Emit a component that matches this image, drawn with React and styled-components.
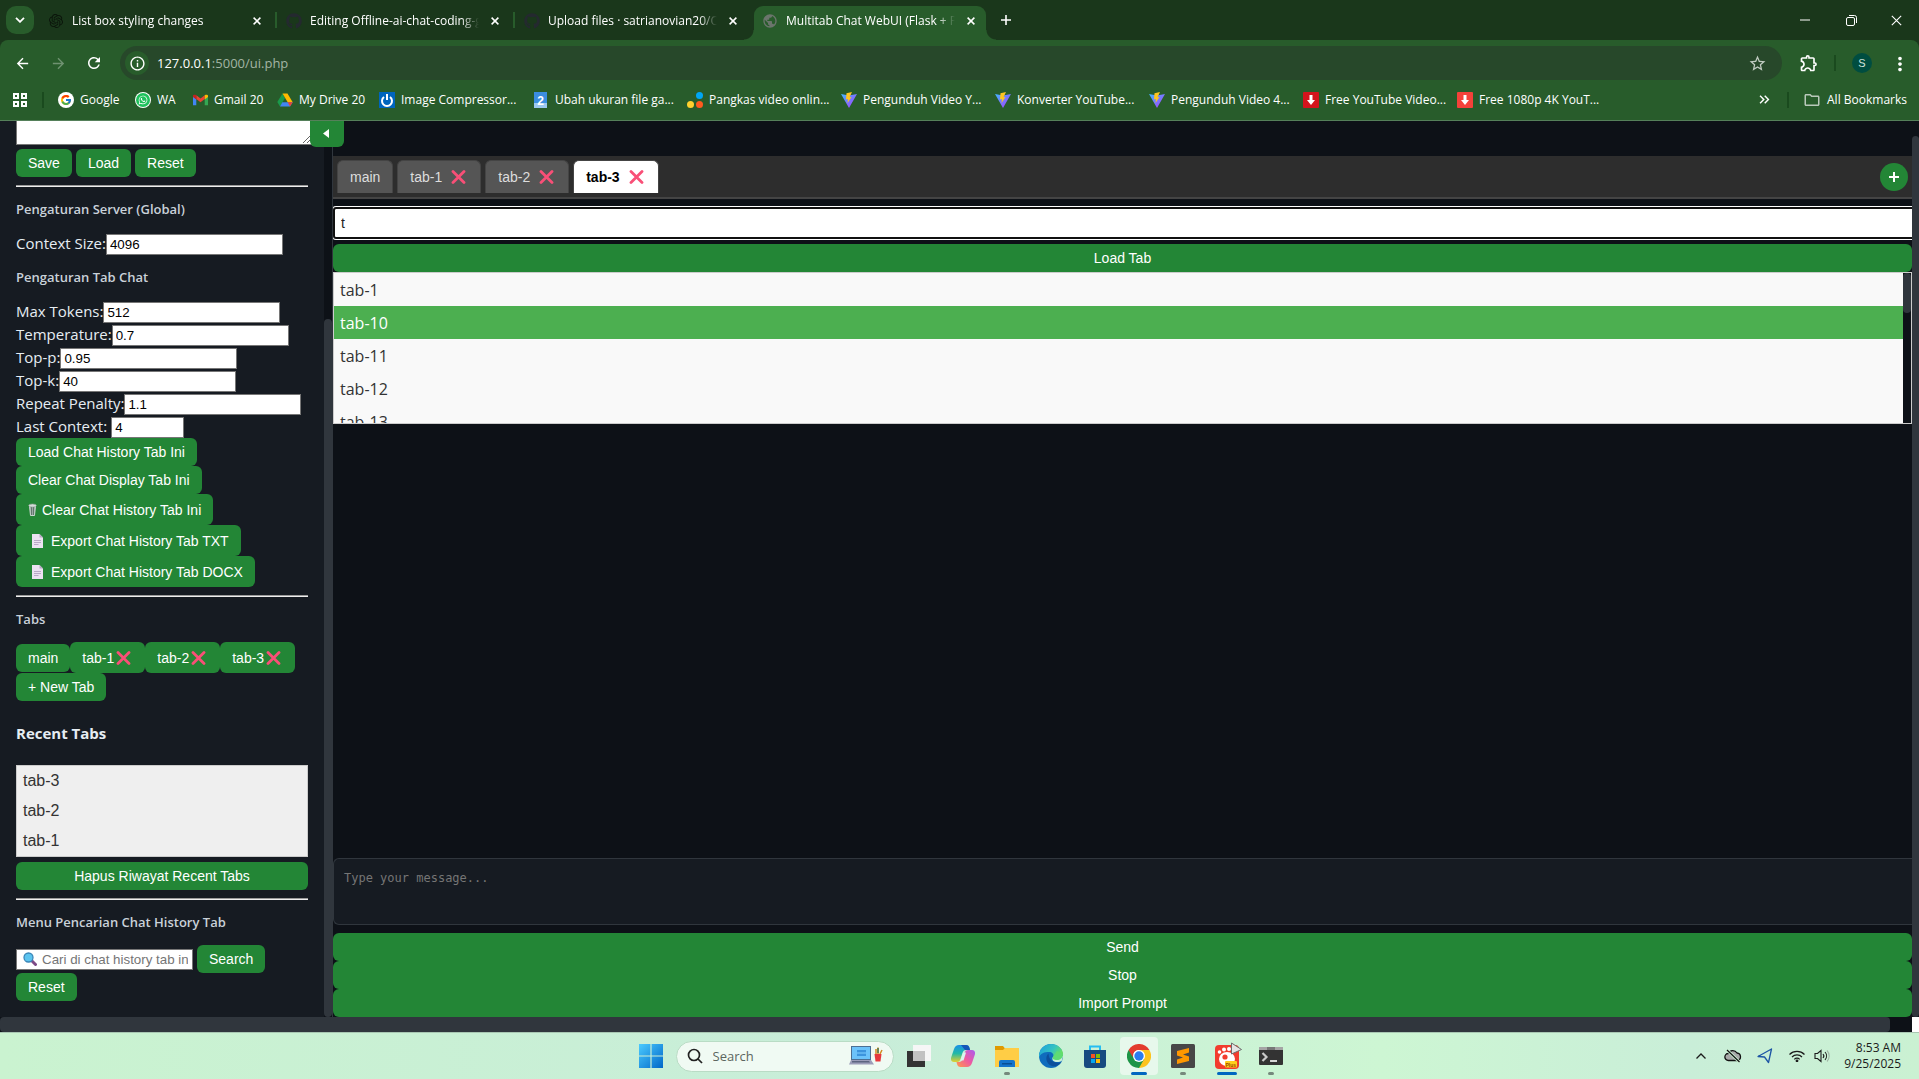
import React from "react";
import styled, { createGlobalStyle, css } from "styled-components";
import { FaGithub, FaWhatsapp } from "react-icons/fa";
import { SiOpenai } from "react-icons/si";
import { FcGoogle } from "react-icons/fc";
import { MdOutlineInfo, MdStarBorder, MdOutlineExtension, MdRefresh, MdArrowBack, MdArrowForward, MdMoreVert, MdPublic, MdKeyboardDoubleArrowRight, MdOutlineFolder } from "react-icons/md";

const ui = `"Open Sans", "Noto Sans", sans-serif`;
const arial = `"Liberation Sans", Arial, sans-serif`;

const GlobalStyle = createGlobalStyle`
  *, *::before, *::after { box-sizing: border-box; }
  body { margin: 0; background: #0d1117; font-family: ${ui}; overflow: hidden; }
  button, input, textarea, select { font-family: ${arial}; margin: 0; }
  button { cursor: pointer; }
  svg { display: block; flex: none; }
`;

const Screen = styled.div`
  display: flex;
  flex-direction: column;
  height: 100vh;
`;

/* ---------- Browser frame ---------- */

const TabStrip = styled.div`
  display: flex;
  align-items: stretch;
  height: 40px;
  padding-left: 6px;
  background: #1a371b;
  color: #fff;
`;

const TabSearch = styled.button`
  width: 28px;
  height: 28px;
  margin: 6px 3px 0 0;
  padding: 0;
  border: 0;
  border-radius: 10px;
  background: #285c2b;
  color: #fff;
  display: grid;
  place-items: center;
`;

const BrowserTab = styled.div`
  position: relative;
  display: flex;
  align-items: center;
  width: 238px;
  margin-top: 6px;
  padding: 0 8px 5px 11px;
  font-size: 12px;
  ${(p) => p.$divider && css`
    &::before {
      content: "";
      position: absolute;
      left: 0;
      top: 6px;
      width: 2px;
      height: 16px;
      background: #285c2b;
    }
  `}
  ${(p) => p.$active && css`
    &::before {
      content: "";
      position: absolute;
      inset: 0 3px;
      background: #285c2b;
      border-radius: 9px 9px 0 0;
    }
    &::after {
      content: "";
      position: absolute;
      left: -7px;
      right: -7px;
      bottom: 0;
      height: 10px;
      background:
        radial-gradient(circle at 0 0, transparent 9px, #285c2b 10px) left / 10px 10px no-repeat,
        radial-gradient(circle at 100% 0, transparent 9px, #285c2b 10px) right / 10px 10px no-repeat;
    }
  `}
  > * { position: relative; z-index: 1; }
`;

const Favicon = styled.span`
  display: grid;
  place-items: center;
  flex: none;
  width: 16px;
`;

const TabTitle = styled.span`
  flex: 1;
  margin: 0 6px 0 8px;
  overflow: hidden;
  white-space: nowrap;
  line-height: 18px;
  mask-image: linear-gradient(to right, #000 calc(100% - 18px), transparent);
`;

const PlainButton = styled.button`
  display: grid;
  place-items: center;
  width: ${(p) => p.$w || 20}px;
  height: ${(p) => p.$h || 20}px;
  padding: 0;
  border: 0;
  background: none;
  color: ${(p) => p.$color || "#fff"};
`;

const NewBrowserTab = styled(PlainButton)`
  margin: 10px 0 0 7px;
`;

const WindowButtons = styled.div`
  display: flex;
  margin-left: auto;
`;

const Toolbar = styled.div`
  display: flex;
  align-items: center;
  height: 40px;
  padding: 6px 8px 0 4px;
  background: #285c2b;
  border-radius: 8px 8px 0 0;
  color: #fff;
`;

const ToolbarBack = styled.div`
  background: #1a371b;
`;

const Omnibox = styled.div`
  flex: 1;
  display: flex;
  align-items: center;
  height: 34px;
  margin: 0 13px 0 8px;
  padding: 0 15px 0 5px;
  border-radius: 17px;
  background: #27482a;
`;

const SiteInfo = styled.span`
  display: grid;
  place-items: center;
  width: 24px;
  height: 24px;
  margin-right: 8px;
  border-radius: 50%;
  background: #285c2b;
`;

const Url = styled.span`
  flex: 1;
  font-size: 13px;
  color: #a3b5a4;
  b { font-weight: 400; color: #fff; }
`;

const Divider = styled.span`
  width: 2px;
  height: 16px;
  margin: ${(p) => p.$m || "0"};
  background: #1a4a1e;
`;

const Avatar = styled.button`
  width: 20px;
  height: 20px;
  padding: 0;
  margin: 0 16px;
  border: 0;
  border-radius: 50%;
  background: #004d40;
  color: #cfe3dc;
  font-size: 11px;
`;

const BookmarkBar = styled.nav`
  display: flex;
  align-items: center;
  height: 41px;
  padding: 0 12px 1px;
  border-bottom: 1px solid #55805a;
  background: #285c2b;
  color: #fff;
`;

const Bookmark = styled.a`
  display: flex;
  align-items: center;
  gap: 6px;
  width: ${(p) => (p.$w ? `${p.$w}px` : "auto")};
  color: #fff;
  font-size: 12px;
  line-height: 16px;
  white-space: nowrap;
  text-decoration: none;
`;

const BookmarkEnd = styled.div`
  display: flex;
  align-items: center;
  margin-left: auto;
`;

/* ---------- Page ---------- */

const Page = styled.div`
  flex: 1;
  min-height: 0;
  display: flex;
  background: #0d1117;
`;

const Sidebar = styled.aside`
  position: relative;
  display: flex;
  width: 333px;
  border-right: 1px solid #30363d;
  background: #161b22;
  color: #e6edf3;
`;

const SidebarBody = styled.div`
  flex: 1;
  min-width: 0;
  padding: 0 16px;
  overflow: hidden;
`;

const Track = styled.div`
  width: ${(p) => p.$w}px;
  padding-top: ${(p) => p.$from || 0}px;
  background: #0d1117;
  display: flex;
  flex: none;
`;

const Thumb = styled.div`
  flex: 1;
  height: ${(p) => p.$h || "100%"};
  border-radius: 4px;
  background: #30363d;
`;

const Toggle = styled.button`
  position: absolute;
  top: 0;
  left: 310px;
  z-index: 2;
  display: grid;
  place-items: center;
  width: 34px;
  height: 26px;
  padding: 0 2px 2px 0;
  border: 0;
  border-radius: 0 0 6px 6px;
  background: #238636;
  color: #fff;
`;

const PromptBox = styled.textarea`
  display: block;
  width: 296px;
  height: 24px;
  min-height: 0;
  border: 1px solid #767676;
  border-top: 0;
  border-radius: 0;
  background: #fff;
  resize: vertical;
`;

const Button = styled.button`
  display: flex;
  align-items: center;
  justify-content: center;
  width: ${(p) => (p.$wide ? "100%" : "auto")};
  height: ${(p) => (p.$tall ? 31 : 28)}px;
  padding: 0 12px;
  border: 0;
  border-radius: 6px;
  background: #238636;
  color: #fff;
  font-size: 14px;
  line-height: 16px;
  white-space: nowrap;
`;

const ButtonRow = styled.div`
  display: flex;
  align-items: center;
  gap: ${(p) => p.$gap || 0}px;
  margin-top: ${(p) => p.$mt || 0}px;
`;

const ButtonStack = styled.div`
  display: flex;
  flex-direction: column;
  align-items: flex-start;
`;

const Rule = styled.hr`
  height: 2px;
  margin: 8px 0;
  border: 0;
  border-top: 1px solid #9a9a9a;
  background: #eeeeee;
`;

const SectionTitle = styled.h4`
  margin: 12px 0 13px;
  color: #c9d1d9;
  font-size: 13px;
  font-weight: 600;
  line-height: 20px;
`;

const RecentTitle = styled.h3`
  margin: 21px 0;
  font-size: 15px;
  font-weight: 700;
  line-height: 22px;
`;

const Fields = styled.div`
  display: flex;
  flex-direction: column;
  gap: 2px;
  padding-top: 2px;
`;

const Field = styled.label`
  display: flex;
  align-items: flex-start;
  gap: ${(p) => p.$gap || 0}px;
  height: 21px;
  font-size: 15px;
  line-height: 19px;
  white-space: nowrap;
`;

const NumberBox = styled.input`
  width: ${(p) => p.$w || 177}px;
  height: 21px;
  padding: 1px 3px;
  border: 1px solid #767676;
  background: #fff;
  color: #000;
`;

const RecentList = styled.select`
  display: block;
  width: 100%;
  height: 92px;
  margin-bottom: 5px;
  padding: 0;
  border: 1px solid #ccc;
  border-radius: 0;
  background: #efefef;
  color: #333;
  font-size: 16px;
  overflow: hidden;
  outline: 0;
  option { padding: 6px 6px 4px; min-height: 30px; line-height: 20px; }
`;

const SearchBox = styled.label`
  display: flex;
  align-items: center;
  gap: 5px;
  width: 177px;
  height: 21px;
  padding: 0 4px 0 6px;
  border: 1px solid #767676;
  background: #fff;
  input {
    flex: 1;
    min-width: 0;
    padding: 0;
    border: 0;
    outline: 0;
    background: none;
  }
  input::placeholder { color: #757575; }
`;

const Main = styled.main`
  flex: 1;
  min-width: 0;
  display: flex;
  flex-direction: column;
  padding-top: 35px;
`;

const ChatTabs = styled.div`
  display: flex;
  align-items: center;
  gap: 4px;
  height: 43px;
  padding: 0 4px;
  border-bottom: 2px solid #444;
  background: #2d2d2d;
`;

const ChatTab = styled.button`
  display: flex;
  align-items: center;
  gap: 7px;
  height: 33px;
  padding: 0 12px;
  border: 1px solid #444;
  border-bottom: 0;
  border-radius: 6px 6px 0 0;
  background: #555;
  color: #ddd;
  font-size: 14px;
  ${(p) => p.$active && css`
    background: #fff;
    color: #000;
    font-weight: 700;
  `}
`;

const AddTab = styled.button`
  display: grid;
  place-items: center;
  width: 28px;
  height: 28px;
  margin-left: auto;
  padding: 0;
  border: 0;
  border-radius: 50%;
  background: #238636;
  color: #fff;
`;

const FilterBox = styled.input`
  height: 32px;
  margin: 8px 0 5px;
  padding: 0 6px;
  border: 2px solid #101010;
  border-right: 0;
  border-radius: 3px 0 0 3px;
  outline: 0;
  box-shadow: 0 0 0 1px #fff;
  background: #fff;
  color: #222;
  font-size: 14px;
`;

const Suggestions = styled.div`
  display: flex;
  height: 152px;
  border: 1px solid #ccc;
  background: #f9f9f9;
`;

const SuggestionList = styled.ul`
  flex: 1;
  margin: 0;
  padding: 0;
  overflow: hidden;
  list-style: none;
`;

const Suggestion = styled.li`
  height: 33px;
  padding: 0 6px;
  background: ${(p) => (p.$active ? "#4caf50" : "#f9f9f9")};
  color: ${(p) => (p.$active ? "#fff" : "#333")};
  font-size: 16px;
  line-height: 34px;
`;

const ChatLog = styled.section`
  flex: 1;
`;

const Message = styled.textarea`
  display: block;
  height: 67px;
  margin-bottom: 8px;
  padding: 11px 10px;
  border: 1px solid #30363d;
  border-right: 0;
  border-radius: 6px 0 0 6px;
  background: #161b22;
  color: #e6edf3;
  font-family: "DejaVu Sans Mono", monospace;
  font-size: 12px;
  line-height: 16px;
  resize: none;
  &::placeholder { color: #757575; }
`;

const BottomScroll = styled.div`
  display: flex;
  height: 15px;
  background: linear-gradient(to left, #fff 7px, #0d1117 7px);
  padding-right: 29px;
`;

/* ---------- Taskbar ---------- */

const Taskbar = styled.footer`
  display: grid;
  grid-template-columns: 1fr auto 1fr;
  align-items: center;
  height: 47px;
  border-top: 1px solid #a9c7b3;
  background: linear-gradient(to right, #caf3d0, #c8edd9 45%, #cdf6d3 72%, #c9eed8 88%, #caf1d2);
`;

const Apps = styled.div`
  grid-column: 2;
  display: flex;
  align-items: center;
  padding-left: 2px;
`;

const AppButton = styled.button`
  position: relative;
  display: grid;
  place-items: center;
  width: 38px;
  height: 38px;
  margin: 0 3px;
  padding: 0 0 1px;
  border: 0;
  border-radius: 4px;
  background: ${(p) => (p.$active ? "#e7f8ec" : "none")};
  &::after {
    content: "";
    position: absolute;
    left: calc(50% - ${(p) => (p.$mark || 0) / 2}px);
    bottom: 0;
    width: ${(p) => p.$mark || 0}px;
    height: 3px;
    border-radius: 2px;
    background: ${(p) => (p.$mark > 6 ? "#0067c0" : "#75897c")};
  }
`;

const TaskSearch = styled.label`
  display: flex;
  align-items: center;
  width: 218px;
  height: 31px;
  margin: 0 3px;
  padding: 0 10px;
  border: 1px solid #b9dcc5;
  border-radius: 16px;
  background: #f0faf3;
  input {
    flex: 1;
    min-width: 0;
    margin-left: 10px;
    padding: 0;
    border: 0;
    outline: 0;
    background: none;
    font-family: ${ui};
    font-size: 13px;
  }
  input::placeholder { color: #5c665f; }
`;

const Tray = styled.div`
  justify-self: end;
  display: flex;
  align-items: center;
  padding-right: 18px;
  color: #1b1b1b;
`;

const TrayIcon = styled.span`
  display: grid;
  place-items: center;
  width: ${(p) => p.$w || 32}px;
`;

const Clock = styled.time`
  width: 70px;
  font-size: 12px;
  line-height: 16px;
  text-align: right;
`;

/* ---------- Drawings ---------- */

const Cross = () => (
  <svg width="19" height="14" viewBox="0 0 19 14" aria-hidden="true">
    <path d="M4 1.500 15 12.500M15 1.500 4 12.500" stroke="#f94f77" strokeWidth="2.800" strokeLinecap="round" />
  </svg>
);
const Close = ({ s = 8 }) => (
  <svg width={s} height={s} viewBox="0 0 8 8"><path d="M.6.6 7.4 7.4M7.4.6.6 7.4" stroke="currentColor" strokeWidth={s > 9 ? 0.8 : 1.5} /></svg>
);
const Trash = () => (
  <svg width="14" height="14" viewBox="0 0 14 14">
    <path d="M1.5 3 2.5 12.5h4L7.5 3z" fill="#9aa9a4" stroke="#cbd5d0" />
    <path d="M3.5 4v8M5.5 4v8" stroke="#55695f" strokeWidth=".8" />
    <ellipse cx="4.5" cy="2.5" rx="3.8" ry="1.5" fill="#d5ddd9" stroke="#8ea098" strokeWidth=".6" />
  </svg>
);
const Doc = () => (
  <svg width="23" height="14" viewBox="0 0 23 14">
    <path d="M4 0h7.5L15 3.5V14H4z" fill="#ece2f2" />
    <path d="M11.5 0v3.5H15z" fill="#b9a9c6" />
    <path d="M6 6.500h7M6 8.500h7M6 10.500h4.500" stroke="#b9a9c6" />
  </svg>
);
const Magnifier = () => (
  <svg width="14" height="14" viewBox="0 0 14 14">
    <path d="m8.500 8.500 4 4" stroke="#7d4a86" strokeWidth="3" strokeLinecap="round" />
    <circle cx="5.5" cy="5.5" r="4.5" fill="#5cc4ef" stroke="#3a86b8" strokeWidth="1.3" />
  </svg>
);
const Plus = ({ s = 10, w = 2 }) => (
  <svg width={s} height={s} viewBox="0 0 10 10"><path d="M5 0v10M0 5h10" stroke="currentColor" strokeWidth={w} /></svg>
);
const AppsGrid = () => (
  <svg width="16" height="16" viewBox="0 0 16 16" fill="none" stroke="#fff" strokeWidth="2">
    <path d="M2 2h4v4H2zM10 2h4v4h-4zM2 10h4v4H2zM10 10h4v4h-4z" />
  </svg>
);
const GoogleMark = () => (
  <svg width="16" height="16" viewBox="0 0 16 16"><circle cx="8" cy="8" r="8" fill="#fff" /><FcGoogle x="2" y="2" size={12} /></svg>
);
const WaMark = () => (
  <svg width="16" height="16" viewBox="0 0 16 16"><circle cx="8" cy="8" r="8" fill="#fff" /><circle cx="8" cy="8" r="7" fill="#1fc15c" /><FaWhatsapp x="3" y="3" size={10} color="#fff" /></svg>
);
const GmailMark = () => (
  <svg width="15" height="16" viewBox="0 0 16 16">
    <path d="M0 4v9.5h3.5V7z" fill="#4285f4" /><path d="M16 4v9.5h-3.5V7z" fill="#34a853" />
    <path d="M3.5 3v4L8 10.5 12.5 7V3L8 6.5z" fill="#ea4335" />
    <path d="M0 3.5v1.3L3.5 7.5V3C2 2 0 2.5 0 3.5z" fill="#c5221f" /><path d="M16 3.5v1.3l-3.500 2.700V3C14 2 16 2.5 16 3.5z" fill="#fbbc04" />
  </svg>
);
const DriveMark = () => (
  <svg width="16" height="16" viewBox="0 0 16 16">
    <path d="M5.5 1.5 8 6 3 14.5.3 10z" fill="#1a9a4b" />
    <path d="M5.5 1.5h5l5.200 8.700h-5z" fill="#ffba00" /><path d="M5.300 10.200h10.400L13 14.500H3z" fill="#4285f4" /><path d="M10.700 10.200h5L13 14.500z" fill="#ea4335" />
  </svg>
);
const PowerMark = () => (
  <svg width="16" height="16" viewBox="0 0 16 16" fill="none" stroke="#fff" strokeWidth="2">
    <path d="M0 0h16v16H0z" fill="#0065bd" stroke="none" /><path d="M5 5a5 5 0 1 0 6 0M8 2v6" />
  </svg>
);
const TwoMark = () => (
  <svg width="16" height="16" viewBox="0 0 16 16">
    <path d="M1 0h13v16H1z" fill="#3b8de0" /><path d="M1 11h13v5H1z" fill="#9cc8f0" />
    <text x="7.5" y="12.5" textAnchor="middle" fontFamily="Liberation Sans" fontWeight="700" fontSize="12" fill="#fff">2</text>
  </svg>
);
const DotsMark = () => (
  <svg width="16" height="16" viewBox="0 0 16 16"><circle cx="12.5" cy="3.5" r="3.5" fill="#00a6f5" /><circle cx="3.5" cy="12.5" r="3.5" fill="#ffd02e" /><circle cx="12.5" cy="12.5" r="3.5" fill="#ff5a1f" /></svg>
);
const ViteMark = () => (
  <svg width="16" height="16" viewBox="0 0 16 16">
    <defs><linearGradient id="vite" x1="0" y1="0" x2="1" y2="1"><stop offset="0" stopColor="#41b8ff" /><stop offset="1" stopColor="#b036fe" /></linearGradient></defs>
    <path d="M0 2 8 16 16 2 8 3.5z" fill="url(#vite)" /><path d="M11 0 5.5 1.2 5 7.5l2-.5-.5 4L10.5 5l-2 .3z" fill="#ffc51f" />
  </svg>
);
const DownMark = ({ fill }) => (
  <svg width="16" height="16" viewBox="0 0 16 16"><rect width="16" height="16" rx="1" fill={fill} /><path d="M6.5 3h3v5H12l-4 5-4-5h2.500z" fill="#fff" /></svg>
);
const WindowsMark = () => (
  <svg width="24" height="24" viewBox="0 0 24 24">
    <defs><linearGradient id="win" x1="0" y1="0" x2="1" y2="1"><stop offset="0" stopColor="#4bcbff" /><stop offset="1" stopColor="#0067c8" /></linearGradient></defs>
    <path d="M0 0h11.400v11.400H0zM12.600 0H24v11.400H12.600zM0 12.600h11.400V24H0zM12.600 12.600H24V24H12.600z" fill="url(#win)" />
  </svg>
);
const SearchArt = () => (
  <svg width="34" height="20" viewBox="0 0 34 20">
    <path d="M2 0h20v14H2z" fill="#4c6f93" /><path d="M3 1h18v12H3z" fill="#6cc3fa" /><path d="M8 4h9v6H8z" fill="#3c94dd" /><path d="M8 7h9" stroke="#7fd0ff" />
    <path d="M2 14h20l3 4.5H0z" fill="#9b9cb8" /><path d="M3 15h17l1 1.500H3z" fill="#5d6480" />
    <path d="M27 8V3M29 8V1.500M31 8 33 4" stroke="#d38b1f" strokeWidth="1.500" /><path d="M29 7V2" stroke="#246d50" strokeWidth="1.200" />
    <path d="M25.500 8h7l-1 7.500h-5z" fill="#e5383c" />
  </svg>
);
const TaskViewMark = () => (
  <svg width="24" height="22" viewBox="0 0 24 22"><path d="M0 6h18v16H0z" fill="#333" /><path d="M6 0h18v16H6z" fill="#f6f6f6" /><path d="M6 6h12v10H6z" fill="#c2c2c2" /></svg>
);
const CopilotMark = () => (
  <svg width="24" height="22" viewBox="0 0 24 22">
    <defs>
      <linearGradient id="cpa" x1="0" y1="0" x2="0" y2="1"><stop offset="0" stopColor="#1a8fe8" /><stop offset=".5" stopColor="#22b9a5" /><stop offset="1" stopColor="#e3cf2f" /></linearGradient>
      <linearGradient id="cpb" x1="1" y1="0" x2="0" y2="1"><stop offset="0" stopColor="#a95cf0" /><stop offset=".5" stopColor="#ee5aa0" /><stop offset="1" stopColor="#ff9a4a" /></linearGradient>
    </defs>
    <path d="M8 0h7c2 0 3 1 3.500 3L19 5h-4c-2 0-3 1-3.500 3L9.500 14c-.6 2-1.500 3-3.500 3H3c-3 0-3.500-2.500-2.700-5L3 4C4 1.500 5.500 0 8 0z" fill="url(#cpa)" />
    <path d="M16 22H9.500c-2 0-3-1-3.500-3l-.5-2H8c2 0 3-1 3.500-3l2-6c.6-2 1.500-3 3.500-3h4c3 0 3.500 2.500 2.700 5L21 18c-1 2.500-2.500 4-5 4z" fill="url(#cpb)" />
    <path d="M12 7.500h3l-2.500 8h-3z" fill="#d9f4ee" />
    <path d="M10 0h5c2 0 3 1 3.500 3L19 5h-5z" fill="#1456b8" />
  </svg>
);
const FolderMark = () => (
  <svg width="24" height="24" viewBox="0 0 24 24"><path d="M0 2h8l2 2.500V8H0z" fill="#e09a00" /><path d="M0 6h8l2-2h14v19H0z" fill="#ffcd45" /><path d="M4 18q0-2 2-2h12q2 0 2 2v5H4z" fill="#1474cc" /><path d="M7 19h10v1.500H7z" fill="#084f95" /></svg>
);
const EdgeMark = () => (
  <svg width="24" height="24" viewBox="0 0 24 24">
    <defs><linearGradient id="edg" x1="0" y1="0" x2="1" y2=".5"><stop offset="0" stopColor="#1b9fe0" /><stop offset=".6" stopColor="#35c3c1" /><stop offset="1" stopColor="#6be35a" /></linearGradient></defs>
    <circle cx="12" cy="12" r="12" fill="#0f6cbd" />
    <path d="M0 11C1 4 6 0 12 0c7 0 12 5 12 10 0 4-3 6-6 6-3.500 0-5-1-4-3 1.500-3-1-5-4-5C5.500 8 1 9 0 14z" fill="url(#edg)" />
    <path d="M9.500 9.500C6 12 6.500 20 13 22c4 1 7-1 9.500-4C19 19.500 10 19 9.500 9.500z" fill="#0c4f9c" />
    <path d="M14 13c-2 3 1 5 4 5 2 0 4-.5 5-1.500L24 12z" fill="#c9efd8" /><path d="M24 10c0 4-3 6-6 6-3.500 0-5-1-4-3l4-6z" fill="#5fdc74" />
  </svg>
);
const StoreMark = () => (
  <svg width="24" height="24" viewBox="0 0 24 24">
    <path d="M7 7V2.500h10V7" fill="none" stroke="#25bdf2" strokeWidth="2" /><path d="M1 6h22v15q0 3-3 3H4q-3 0-3-3z" fill="#174a80" />
    <path d="M8 10h4v4H8z" fill="#f35325" /><path d="M13 10h4v4h-4z" fill="#81bc06" /><path d="M8 15h4v4H8z" fill="#05a6f0" /><path d="M13 15h4v4h-4z" fill="#ffba08" />
  </svg>
);
const ChromeMark = () => (
  <svg width="24" height="24" viewBox="0 0 24 24">
    <path d="M12 12V6h10.400A12 12 0 0 1 12 24z" fill="#fcc31e" />
    <path d="M1.600 6A12 12 0 0 0 12 24l5.200-9H12z" fill="#1e9447" />
    <path d="M1.600 6A12 12 0 0 1 22.400 6H12a6 6 0 0 0-5.500 4l-.8 3z" fill="#e33b2e" />
    <circle cx="12" cy="12" r="6" fill="#fff" /><circle cx="12" cy="12" r="4.700" fill="#2b7cf0" />
  </svg>
);
const SublimeMark = () => (
  <svg width="24" height="24" viewBox="0 0 24 24"><rect width="24" height="24" rx="1.500" fill="#474747" /><path d="M18 4v4.500l-6 2 6 2v4.500L6 20v-4.500l6-2-6-2V7z" fill="#ff9800" /></svg>
);
const GomMark = () => (
  <svg width="30" height="28" viewBox="0 0 30 28">
    <rect x="3" y="3" width="24" height="24" rx="4" fill="#f23c2e" /><ellipse cx="15" cy="17" rx="8" ry="7" fill="#fff" /><circle cx="13" cy="15" r="2.600" fill="#f23c2e" />
    <circle cx="7.500" cy="10" r="1.800" fill="#fff" /><circle cx="12" cy="7.500" r="2" fill="#fff" /><circle cx="17" cy="7" r="2" fill="#fff" />
    <rect x="13" y="19" width="12" height="6.500" rx="1" fill="#ffcf1c" /><text x="13.500" y="24.500" fontFamily="Liberation Sans" fontWeight="700" fontSize="5" fill="#9c4b00">Plus</text>
    <path d="M19.500 1 29.500 7.500 19.500 12z" fill="#e5e5e5" stroke="#6d6d6d" />
  </svg>
);
const TerminalMark = () => (
  <svg width="24" height="18" viewBox="0 0 24 18"><rect width="24" height="18" rx="1" fill="#333" /><path d="M0 0h24v3H0z" fill="#a5a5a5" /><path d="M8 0h8v3H8z" fill="#777" /><path d="m3.500 6 4 4-4 4" fill="none" stroke="#c9c9c9" strokeWidth="2.200" /><path d="M11 14h7" stroke="#fff" strokeWidth="1.600" /></svg>
);

/* ---------- Data ---------- */

const browserTabs = [
  { title: "List box styling changes", icon: <SiOpenai size={14} color="#0b150b" /> },
  { title: "Editing Offline-ai-chat-coding-g", icon: <FaGithub size={16} color="#24292f" />, divider: true },
  { title: "Upload files · satrianovian20/Of", icon: <FaGithub size={16} color="#24292f" />, divider: true },
  { title: "Multitab Chat WebUI (Flask + P", icon: <MdPublic size={16} color="#6b756c" />, active: true },
];

const bookmarks = [
  ["Google", 77, <GoogleMark />], ["WA", 58, <WaMark />], ["Gmail 20", 84, <GmailMark />], ["My Drive 20", 102, <DriveMark />],
  ["Image Compressor...", 154, <PowerMark />], ["Ubah ukuran file ga...", 154, <TwoMark />], ["Pangkas video onlin...", 154, <DotsMark />],
  ["Pengunduh Video Y...", 154, <ViteMark />], ["Konverter YouTube...", 154, <ViteMark />], ["Pengunduh Video 4...", 154, <ViteMark />],
  ["Free YouTube Video...", 154, <DownMark fill="#d3141c" />], ["Free 1080p 4K YouT...", 154, <DownMark fill="#f5413a" />],
];

const tabFields = [
  ["Max Tokens:", "512"], ["Temperature:", "0.7"], ["Top-p:", "0.95"], ["Top-k:", "40"], ["Repeat Penalty:", "1.1"], ["Last Context:", "4", 73, 4],
];

const apps = [
  ["Task View", <TaskViewMark />], ["Copilot", <CopilotMark />], ["File Explorer", <FolderMark />, 6], ["Edge", <EdgeMark />], ["Store", <StoreMark />],
  ["Chrome", <ChromeMark />, 16, true], ["Sublime Text", <SublimeMark />, 6], ["GOM Player", <GomMark />, 20], ["Terminal", <TerminalMark />, 6],
];

function BrowserFrame() {
  return (
    <header>
      <TabStrip>
        <TabSearch aria-label="Search tabs">
          <svg width="10" height="6" viewBox="0 0 10 6"><path d="m1 .8 4 4 4-4" fill="none" stroke="#fff" strokeWidth="1.800" /></svg>
        </TabSearch>
        {browserTabs.map((t) => (
          <BrowserTab key={t.title} $active={t.active} $divider={t.divider}>
            <Favicon>{t.icon}</Favicon>
            <TabTitle>{t.title}</TabTitle>
            <PlainButton aria-label="Close tab"><Close /></PlainButton>
          </BrowserTab>
        ))}
        <NewBrowserTab aria-label="New tab"><Plus s={10} w={1.6} /></NewBrowserTab>
        <WindowButtons>
          <PlainButton $w={46} $h={40} aria-label="Minimize"><svg width="10" height="2"><path d="M0 1h10" stroke="#fff" /></svg></PlainButton>
          <PlainButton $w={46} $h={40} aria-label="Restore">
            <svg width="11" height="11" viewBox="0 0 11 11" fill="none" stroke="#fff"><rect x=".5" y="2.5" width="8" height="8" rx="1.5" /><path d="M3 .5h5.500a2 2 0 0 1 2 2V8" /></svg>
          </PlainButton>
          <PlainButton $w={45} $h={40} aria-label="Close window"><Close s={11} /></PlainButton>
        </WindowButtons>
      </TabStrip>
      <ToolbarBack>
        <Toolbar>
          <PlainButton $w={36} aria-label="Back"><MdArrowBack size={17} /></PlainButton>
          <PlainButton $w={36} $color="#6f9271" aria-label="Forward"><MdArrowForward size={17} /></PlainButton>
          <PlainButton $w={36} aria-label="Reload"><MdRefresh size={18} /></PlainButton>
          <Omnibox>
            <SiteInfo><MdOutlineInfo size={17} /></SiteInfo>
            <Url><b>127.0.0.1</b>:5000/ui.php</Url>
            <PlainButton $color="#c0cbc1" aria-label="Bookmark this page"><MdStarBorder size={19} /></PlainButton>
          </Omnibox>
          <PlainButton $w={28} aria-label="Extensions"><MdOutlineExtension size={20} /></PlainButton>
          <Divider $m="0 0 0 11px" />
          <Avatar>S</Avatar>
          <PlainButton $w={23} aria-label="Menu"><MdMoreVert size={22} /></PlainButton>
        </Toolbar>
      </ToolbarBack>
      <BookmarkBar>
        <AppsGrid />
        <Divider $m="0 14px" />
        {bookmarks.map(([name, w, icon]) => (
          <Bookmark key={name} href="#" $w={w}>{icon}<span>{name}</span></Bookmark>
        ))}
        <BookmarkEnd>
          <MdKeyboardDoubleArrowRight size={17} />
          <Divider $m="0 14px" />
          <Bookmark href="#"><MdOutlineFolder size={18} color="#b9c8ba" /><span>All Bookmarks</span></Bookmark>
        </BookmarkEnd>
      </BookmarkBar>
    </header>
  );
}

function SettingsSidebar() {
  return (
    <Sidebar>
      <SidebarBody>
        <PromptBox aria-label="System prompt" />
        <ButtonRow $gap={4} $mt={4}><Button>Save</Button><Button>Load</Button><Button>Reset</Button></ButtonRow>
        <Rule />
        <SectionTitle>Pengaturan Server (Global)</SectionTitle>
        <Fields><Field>Context Size:<NumberBox defaultValue="4096" /></Field></Fields>
        <SectionTitle>Pengaturan Tab Chat</SectionTitle>
        <Fields>
          {tabFields.map(([label, value, w, gap]) => (
            <Field key={label} $gap={gap}>{label}<NumberBox $w={w} defaultValue={value} /></Field>
          ))}
        </Fields>
        <ButtonStack>
          <Button>Load Chat History Tab Ini</Button>
          <Button>Clear Chat Display Tab Ini</Button>
          <Button $tall><Trash />Clear Chat History Tab Ini</Button>
          <Button $tall><Doc />Export Chat History Tab TXT</Button>
          <Button $tall><Doc />Export Chat History Tab DOCX</Button>
        </ButtonStack>
        <Rule />
        <SectionTitle>Tabs</SectionTitle>
        <ButtonRow>
          <Button>main</Button>
          <Button $tall>tab-1<Cross /></Button>
          <Button $tall>tab-2<Cross /></Button>
          <Button $tall>tab-3<Cross /></Button>
        </ButtonRow>
        <ButtonStack><Button>+ New Tab</Button></ButtonStack>
        <RecentTitle>Recent Tabs</RecentTitle>
        <RecentList size={3} aria-label="Recent Tabs">
          <option>tab-3</option><option>tab-2</option><option>tab-1</option>
        </RecentList>
        <Button $wide>Hapus Riwayat Recent Tabs</Button>
        <Rule />
        <SectionTitle>Menu Pencarian Chat History Tab</SectionTitle>
        <ButtonRow $gap={4}>
          <SearchBox><Magnifier /><input placeholder="Cari di chat history tab ini..." aria-label="Cari di chat history" /></SearchBox>
          <Button>Search</Button>
        </ButtonRow>
        <ButtonStack><Button>Reset</Button></ButtonStack>
      </SidebarBody>
      <Track $w={8} $from={198}><Thumb /></Track>
      <Toggle aria-label="Hide sidebar"><svg width="6" height="9" viewBox="0 0 6 9"><path d="M6 0v9L0 4.500z" fill="#fff" /></svg></Toggle>
    </Sidebar>
  );
}

function Chat() {
  return (
    <Main>
      <ChatTabs>
        <ChatTab>main</ChatTab>
        <ChatTab>tab-1<Cross /></ChatTab>
        <ChatTab>tab-2<Cross /></ChatTab>
        <ChatTab $active>tab-3<Cross /></ChatTab>
        <AddTab aria-label="Add tab"><Plus /></AddTab>
      </ChatTabs>
      <FilterBox defaultValue="t" aria-label="Find tab" />
      <Button $wide>Load Tab</Button>
      <Suggestions>
        <SuggestionList role="listbox">
          {["tab-1", "tab-10", "tab-11", "tab-12", "tab-13"].map((t) => (
            <Suggestion key={t} role="option" aria-selected={t === "tab-10"} $active={t === "tab-10"}>{t}</Suggestion>
          ))}
        </SuggestionList>
        <Track $w={8}><Thumb $h="40px" /></Track>
      </Suggestions>
      <ChatLog />
      <Message placeholder="Type your message..." aria-label="Message" />
      <Button $wide>Send</Button>
      <Button $wide>Stop</Button>
      <Button $wide>Import Prompt</Button>
    </Main>
  );
}

function SystemBar() {
  return (
    <Taskbar>
      <Apps>
        <AppButton aria-label="Start"><WindowsMark /></AppButton>
        <TaskSearch>
          <svg width="16" height="16" viewBox="0 0 16 16" fill="none" stroke="#222" strokeWidth="1.700"><circle cx="7" cy="7" r="5.500" /><path d="m11 11 4 4" /></svg>
          <input placeholder="Search" aria-label="Search" />
          <SearchArt />
        </TaskSearch>
        {apps.map(([name, icon, mark, active]) => (
          <AppButton key={name} aria-label={name} $mark={mark} $active={active}>{icon}</AppButton>
        ))}
      </Apps>
      <Tray>
        <TrayIcon><svg width="10" height="6" viewBox="0 0 10 6"><path d="m.5 5.500 4.500-4.500 4.500 4.500" fill="none" stroke="#1b1b1b" strokeWidth="1.300" /></svg></TrayIcon>
        <TrayIcon><svg width="18" height="14" viewBox="0 0 18 14"><path d="M4.500 11.500a3.500 3.500 0 0 1-.3-7A5 5 0 0 1 13 4a3.800 3.800 0 0 1 .5 7.500z" fill="#aaa" stroke="#111" strokeWidth="1.300" /><path d="m3 1 12.500 12" stroke="#caf1d2" strokeWidth="3" /><path d="m3 1 12.500 12" stroke="#111" strokeWidth="1.200" /></svg></TrayIcon>
        <TrayIcon><svg width="16" height="16" viewBox="0 0 16 16"><path d="M14.500 1 1 8.500l6.500.5 4 5.500z" fill="none" stroke="#1d55a5" strokeWidth="1.300" strokeLinejoin="round" /></svg></TrayIcon>
        <TrayIcon><svg width="16" height="12" viewBox="0 0 16 12" fill="none" stroke="#1b1b1b" strokeWidth="1.200"><path d="M.5 4.500a10.500 10.500 0 0 1 15 0M3 7a7 7 0 0 1 10 0M5.300 9.300a3.800 3.800 0 0 1 5.400 0" /><circle cx="8" cy="10.800" r=".8" fill="#1b1b1b" /></svg></TrayIcon>
        <TrayIcon $w={18}><svg width="16" height="14" viewBox="0 0 16 14" fill="none" stroke="#1b1b1b" strokeWidth="1.100"><path d="M1 4.500h2.500L7 1.500v11L3.500 9.500H1zM9 5a3 3 0 0 1 0 4M11 3a6 6 0 0 1 0 8" /><path d="M13 1.500a8 8 0 0 1 0 11" stroke="#9fb5a5" /></svg></TrayIcon>
        <Clock>8:53 AM<br />9/25/2025</Clock>
      </Tray>
    </Taskbar>
  );
}

export default function App() {
  return (
    <Screen>
      <GlobalStyle />
      <BrowserFrame />
      <Page>
        <SettingsSidebar />
        <Chat />
        <Track $w={7} $from={15}><Thumb /></Track>
      </Page>
      <BottomScroll><Thumb /></BottomScroll>
      <SystemBar />
    </Screen>
  );
}
